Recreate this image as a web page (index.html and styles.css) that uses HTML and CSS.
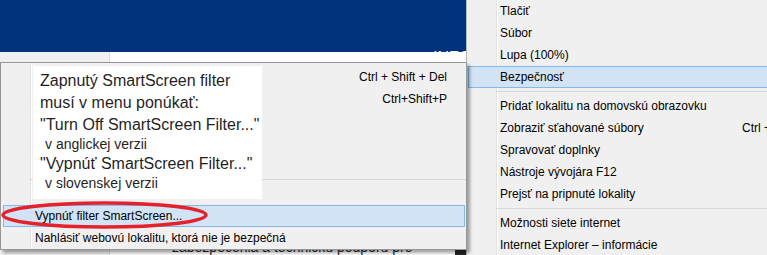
FILE: index.html
```html
<!DOCTYPE html>
<html lang="sk">

<head>
    <meta charset="UTF-8">
    <meta name="viewport" content="width=device-width, initial-scale=1.0">
    <title>Bezpečnosť - SmartScreen filter</title>
    <link rel="stylesheet" href="styles.css">
</head>

<body>
    <!-- stránka za menu -->
    <div class="page">
        <div class="tabs">
            <span class="t1"></span>
            <span class="t2"></span>
            <span class="t3"></span>
            <span class="t4"></span>
        </div>
        <div class="banner"><span class="info">INFO</span></div>
        <div class="content">
            <div class="side"></div>
            <div class="article">
                <p>zabezpečenia a technickú podporu pre</p>
            </div>
            <div class="thumb"></div>
        </div>
    </div>

    <!-- hlavné menu Nástroje -->
    <ul class="menu">
        <li><span>Tlačiť</span></li>
        <li><span>Súbor</span></li>
        <li><span>Lupa (100%)</span></li>
        <li class="active"><span>Bezpečnosť</span></li>
        <li class="sep"></li>
        <li><span>Pridať lokalitu na domovskú obrazovku</span></li>
        <li><span>Zobraziť sťahované súbory</span><span class="key">Ctrl + J</span></li>
        <li><span>Spravovať doplnky</span></li>
        <li><span>Nástroje vývojára F12</span></li>
        <li><span>Prejsť na pripnuté lokality</span></li>
        <li class="sep"></li>
        <li><span>Možnosti siete internet</span></li>
        <li><span>Internet Explorer – informácie</span></li>
    </ul>

    <!-- podmenu Bezpečnosť -->
    <ul class="submenu">
        <li><span></span><span>Ctrl + Shift + Del</span></li>
        <li><span></span><span>Ctrl+Shift+P</span></li>
        <li></li>
        <li></li>
        <li></li>
        <li class="sep"></li>
        <li></li>
        <li class="active"><span>Vypnúť filter SmartScreen...</span></li>
        <li><span>Nahlásiť webovú lokalitu, ktorá nie je bezpečná</span></li>

        <!-- vložený popis -->
        <div class="note">
            <p>Zapnutý SmartScreen filter</p>
            <p>musí v menu ponúkať:</p>
            <p>"Turn Off SmartScreen Filter..."</p>
            <p class="small">v anglickej verzii</p>
            <p>"Vypnúť SmartScreen Filter..."</p>
            <p class="small">v slovenskej verzii</p>
        </div>

        <svg class="circle" width="212" height="34" viewBox="0 0 212 34">
            <ellipse cx="104.5" cy="17" rx="101.5" ry="12" fill="none" stroke="#e4222b" stroke-width="3.5"/>
        </svg>
    </ul>
</body>

</html>
```

FILE: styles.css
```css
* {
    margin: 0;
    padding: 0;
    box-sizing: border-box;
}

body {
    width: 767px;
    height: 255px;
    overflow: hidden;
    position: relative;
    display: flex;
    background: #f0f0f0;
    font-family: "Liberation Sans", Arial, sans-serif;
}

/* stránka */
.page {
    width: 466px;
    flex-shrink: 0;
    display: flex;
    flex-direction: column;
}

.tabs {
    height: 2px;
    display: flex;
}

.tabs span {
    background: #8cb34c;
}

.t1 {
    width: 72px;
}

.tabs .t2 {
    width: 198px;
    background: #fff;
}

.tabs .t3 {
    width: 28px;
    background: #c8c8be;
}

.t4 {
    flex: 1;
}

.banner {
    height: 61px;
    background: #01337c;
    overflow: hidden;
    white-space: nowrap;
    padding: 49px 0 0 433px;
    color: #fff;
    font-size: 16px;
    line-height: 18px;
}

.info {
    display: inline-block;
    width: 33px;
    overflow: hidden;
    vertical-align: top;
}

.content {
    flex: 1;
    display: flex;
    background: #fff;
}

.side {
    width: 110px;
    background: #f0f0f0;
    border-right: 1px solid #dadada;
}

.article {
    flex: 1;
    padding: 187px 0 0 62px;
    font-size: 14px;
    color: #222;
    white-space: nowrap;
    overflow: hidden;
}

.thumb {
    width: 11px;
    margin-top: 187px;
    background: #262626;
}

/* menu */
.menu {
    width: 340px;
    flex-shrink: 0;
    list-style: none;
    border-left: 1px solid #b9b9b9;
    background: linear-gradient(to right, #f0f0f0 29px, #e2e2e2 29px, #e2e2e2 30px, #fff 30px, #fff 31px, #f0f0f0 31px);
    font-size: 12px;
    color: #000;
}

.menu li {
    height: 22px;
    line-height: 22px;
    padding-left: 33px;
    white-space: nowrap;
    display: grid;
    grid-template-columns: 242px auto;
}

.menu .active {
    margin-left: 1px;
    padding-left: 31px;
    line-height: 20px;
    border: 1px solid #84b9ec;
    background: #d1e3f5;
}

.menu .sep,
.submenu .sep {
    height: 7px;
    background: linear-gradient(#d7d7d7, #d7d7d7) no-repeat 29px 3px / calc(100% - 29px) 1px;
}

/* podmenu */
.submenu {
    position: absolute;
    left: 0;
    top: 62px;
    width: 467px;
    height: 188px;
    padding-top: 3px;
    list-style: none;
    border: 1px solid #979797;
    background: linear-gradient(to right, #f0f0f0 29px, #e2e2e2 29px, #e2e2e2 30px, #fff 30px, #fff 31px, #f0f0f0 31px);
    box-shadow: 3px 3px 3px rgba(0, 0, 0, 0.35);
    font-size: 12px;
    color: #000;
}

.submenu li {
    height: 22px;
    line-height: 22px;
    padding: 0 19px 0 34px;
    display: flex;
    justify-content: space-between;
    white-space: nowrap;
}

.submenu .active {
    margin: 0 1px 0 2px;
    padding: 0 17px 0 31px;
    line-height: 20px;
    border: 1px solid #84b9ec;
    background: #d1e3f5;
}

.note {
    position: absolute;
    left: 32px;
    top: 3px;
    width: 229px;
    height: 133px;
    padding: 4px 0 0 7px;
    background: #fff;
    color: #1f1f1f;
    font-size: 16px;
    line-height: 22px;
    white-space: nowrap;
}

.note .small {
    padding-left: 5px;
    font-size: 14px;
    line-height: 17px;
}

.circle {
    position: absolute;
    left: -1px;
    top: 135px;
}
```
